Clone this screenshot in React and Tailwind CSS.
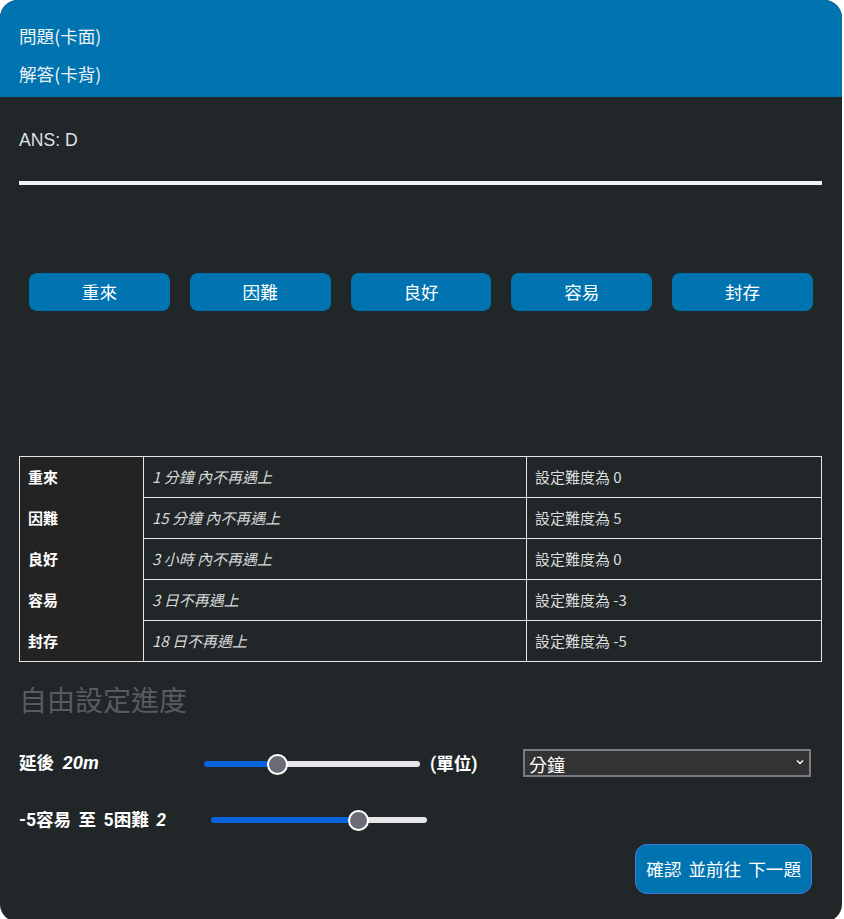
import { useState } from "react";

const grades = [
    { label: "重來", wait: "1 分鐘 內不再遇上", diff: "設定難度為 0" },
    { label: "因難", wait: "15 分鐘 內不再遇上", diff: "設定難度為 5" },
    { label: "良好", wait: "3 小時 內不再遇上", diff: "設定難度為 0" },
    { label: "容易", wait: "3 日不再遇上", diff: "設定難度為 -3" },
    { label: "封存", wait: "18 日不再遇上", diff: "設定難度為 -5" },
];

const gradeLabels = ["重來", "因難", "良好", "容易", "封存"];

const rangeClass =
    "h-[6px] appearance-none rounded-full cursor-pointer outline-none " +
    "[&::-webkit-slider-thumb]:appearance-none [&::-webkit-slider-thumb]:w-[21px] [&::-webkit-slider-thumb]:h-[21px] " +
    "[&::-webkit-slider-thumb]:rounded-full [&::-webkit-slider-thumb]:bg-[#6c6b78] [&::-webkit-slider-thumb]:border-2 " +
    "[&::-webkit-slider-thumb]:border-white";

function Slider({ min, max, value, onChange, className }) {
    const pct = ((value - min) / (max - min)) * 100;
    return (
        <input
            type="range"
            min={min}
            max={max}
            value={value}
            onChange={(e) => onChange(Number(e.target.value))}
            className={rangeClass + " " + className}
            style={{ background: `linear-gradient(to right, #0b63e0 ${pct}%, #e6e6e9 ${pct}%)` }}
        />
    );
}

export default function App() {
    const [delay, setDelay] = useState(20);
    const [difficulty, setDifficulty] = useState(2);

    return (
        <div className="w-[842px] min-h-[922px] bg-[#212629] rounded-[18px] overflow-hidden text-[17.6px] text-[#dee2e6] font-['Noto_Sans_CJK_TC',sans-serif]">
            {/* 卡片標題 */}
            <div className="bg-[#0073b1] px-[19px] pt-[23px] pb-[11px] flex flex-col gap-[13px] leading-[25px] text-[#eef3f7]">
                <div>問題(卡面)</div>
                <div>解答(卡背)</div>
            </div>

            <div className="px-[19px]">
                <div className="pt-[30px] leading-[26px] font-['Liberation_Sans','Noto_Sans_CJK_TC',sans-serif]">ANS: D</div>
                <div className="mt-[28px] h-[4px] bg-[#f2f2f2] w-[803px]"></div>

                {/* 評分按鈕 */}
                <div className="mt-[88px] px-[10px] grid grid-cols-5 gap-[20px]">
                    {gradeLabels.map((g) => (
                        <button key={g} className="h-[38px] rounded-[8px] bg-[#0073b1] text-white">
                            {g}
                        </button>
                    ))}
                </div>

                {/* 間隔表 */}
                <table className="mt-[145px] w-[803px] border-collapse border border-[#e6e6e6] text-[15px]">
                    <tbody>
                        {grades.map((r) => (
                            <tr key={r.label} className="h-[41px]">
                                <th className="w-[124px] text-left font-bold px-[8px] bg-[#232323] text-white border-x border-[#e6e6e6]">
                                    {r.label}
                                </th>
                                <td className="w-[383px] px-[8px] italic border border-[#e6e6e6] text-[#d8d8d8]">
                                    {r.wait}
                                </td>
                                <td className="px-[8px] border border-[#e6e6e6] text-[#dcdcdc]">{r.diff}</td>
                            </tr>
                        ))}
                    </tbody>
                </table>

                <h2 className="mt-[17px] text-[28px] leading-[40px] text-[#585c5f]">自由設定進度</h2>

                {/* 延後 */}
                <div className="mt-[31px] flex items-center h-[28px] font-bold text-white [word-spacing:4px] font-['Roboto','Noto_Sans_CJK_TC',sans-serif]">
                    <div className="w-[185px]">
                        延後 <span className="italic text-[18.5px]">{delay}m</span>
                    </div>
                    <Slider min={1} max={60} value={delay} onChange={setDelay} className="w-[216px]" />
                    <div className="ml-[10px] w-[93px]">(單位)</div>
                    <div className="relative">
                        <select className="appearance-none w-[288px] h-[28px] bg-[#333333] border-2 border-[#7b7b84] text-[18px] font-normal text-white pl-[4px] font-['Noto_Sans_CJK_TC',sans-serif]">
                            <option>分鐘</option>
                            <option>小時</option>
                            <option>日</option>
                        </select>
                        <svg className="absolute right-[7px] top-[10px] pointer-events-none" width="8" height="6" viewBox="0 0 8 6" fill="none">
                            <path d="M1 1.5 L4 4.5 L7 1.5" stroke="#ffffff" strokeWidth="1.3" />
                        </svg>
                    </div>
                </div>

                {/* 難度 */}
                <div className="mt-[28px] flex items-center h-[28px] font-bold text-white [word-spacing:3px] font-['Roboto','Noto_Sans_CJK_TC',sans-serif]">
                    <div className="w-[192px]">
                        -5容易 至 5困難 <span className="italic">{difficulty}</span>
                    </div>
                    <Slider min={-5} max={5} value={difficulty} onChange={setDifficulty} className="w-[216px]" />
                </div>

                <div className="mt-[10px] flex justify-end pr-[11px] pb-[20px]">
                    <button className="h-[50px] px-[10px] rounded-[12px] bg-[#0073b1] border border-[#4a78d6] text-white [word-spacing:3px]">
                        確認 並前往 下一題
                    </button>
                </div>
            </div>
        </div>
    );
}
